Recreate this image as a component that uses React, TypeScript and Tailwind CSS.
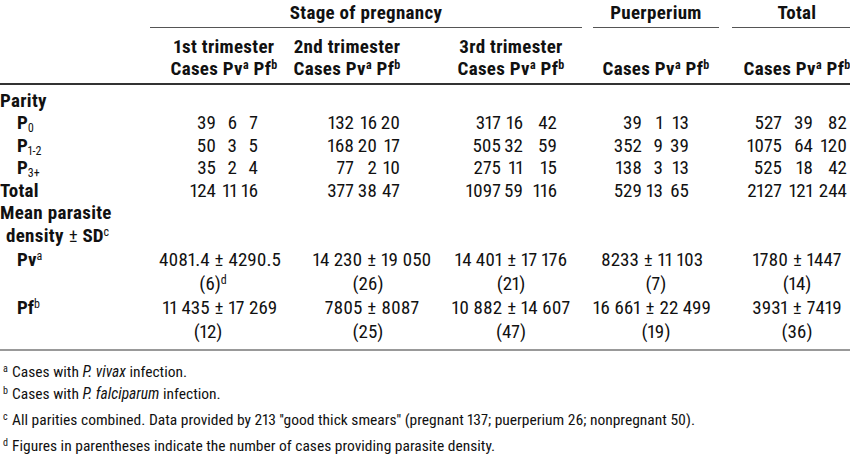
import React from 'react'

type Group = {
  cell: string
  head: string
  sub: [string, string, string]
  dens: string
  paren: string
}

// column groups: 1st, 2nd, 3rd trimester, puerperium, total
const groups: Group[] = [
  { cell: 'w-[140px]', head: 'pl-[8px]', sub: ['w-[66px]', 'w-[21px]', 'w-[21px]'], dens: '', paren: 'pr-[24px]' },
  { cell: 'w-[150px]', head: 'pr-[36px]', sub: ['w-[64px]', 'w-[23px]', 'w-[23px]'], dens: 'pl-[14px]', paren: 'pl-[6px]' },
  { cell: 'w-[142px]', head: '', sub: ['w-[61px]', 'w-[22px]', 'w-[34px]'], dens: '', paren: '' },
  { cell: 'ml-[11px] w-[126px]', head: '', sub: ['w-[49px]', 'w-[21px]', 'w-[26px]'], dens: 'pr-[8px]', paren: '' },
  { cell: 'ml-[13px] w-[130px]', head: '', sub: ['w-[50px]', 'w-[31px]', 'w-[34px]'], dens: '', paren: '' },
]

const parity = [
  { label: '0', h: 'h-[23px]', data: [[39, 6, 7], [132, 16, 20], [317, 16, 42], [39, 1, 13], [527, 39, 82]] },
  { label: '1-2', h: 'h-[22px]', data: [[50, 3, 5], [168, 20, 17], [505, 32, 59], [352, 9, 39], [1075, 64, 120]] },
  { label: '3+', h: 'h-[23px]', data: [[35, 2, 4], [77, 2, 10], [275, 11, 15], [138, 3, 13], [525, 18, 42]] },
]
const totals = [[124, 11, 16], [377, 38, 47], [1097, 59, 116], [529, 13, 65], [2127, 121, 244]]

const pv = ['4081.4', '14 230', '14 401', '8233', '1780']
const pvSd = ['4290.5', '19 050', '17 176', '11 103', '1447']
const pvN = ['6', '26', '21', '7', '14']
const pf = ['11 435', '7805', '10 882', '16 661', '3931']
const pfSd = ['17 269', '8087', '14 607', '22 499', '7419']
const pfN = ['12', '25', '47', '19', '36']

function Row({ h, label, children }: { h: string; label?: React.ReactNode; children?: React.ReactNode }) {
  return (
    <div className={`flex items-center whitespace-nowrap ${h}`}>
      <div className="w-[150px] shrink-0">{label}</div>
      {children}
    </div>
  )
}

function Sup({ children, bold }: { children: React.ReactNode; bold?: boolean }) {
  return <sup className={`text-[12px] ${bold ? 'font-bold' : 'font-normal'}`}>{children}</sup>
}

function PlusMinus() {
  return <span className="px-[5px]">±</span>
}

function CasesHead() {
  return (
    <>
      Cases Pv<Sup bold>a</Sup> Pf<Sup bold>b</Sup>
    </>
  )
}

function Foot({ mark, className = '', children }: { mark: string; className?: string; children: React.ReactNode }) {
  return (
    <div className={`flex h-[22px] items-center whitespace-nowrap ${className}`}>
      <span className="w-[12px] self-start pt-[2px] pl-[3px] text-[10px]">{mark}</span>
      <span>{children}</span>
    </div>
  )
}

export default function App() {
  return (
    <div className="w-[850px] h-[458px] overflow-hidden bg-white text-[#111] font-['Roboto','Open_Sans',sans-serif] [font-stretch:87%] proportional-nums text-[19px] leading-none">
      <div className="w-[862px]">
        {/* header */}
        <div className="pt-px font-bold tracking-[0.3px]">
          <Row h="h-[22px]">
            <div className="w-[432px] text-center">Stage of pregnancy</div>
            <div className="ml-[11px] w-[126px] text-center">Puerperium</div>
            <div className="ml-[13px] w-[130px] text-center">Total</div>
          </Row>
          <div className="mt-[4px] flex">
            <div className="w-[150px]" />
            <div className="h-px w-[432px] bg-[#555]" />
            <div className="ml-[11px] h-px w-[126px] bg-[#555]" />
            <div className="ml-[13px] h-px w-[130px] bg-[#555]" />
          </div>
          <div className="mt-[7px]">
            <Row h="h-[22px]">
              {['1st trimester', '2nd trimester', '3rd trimester'].map((t, i) => (
                <div key={t} className={`${groups[i].cell} ${groups[i].head} text-center`}>
                  {t}
                </div>
              ))}
            </Row>
            <Row h="h-[22px]">
              {groups.map((g, i) => (
                <div key={i} className={`${g.cell} ${g.head} text-center`}>
                  <CasesHead />
                </div>
              ))}
            </Row>
          </div>
          <div className="mt-[4px] h-[2px] bg-[#333]" />
        </div>

        {/* body */}
        <div className="pt-[4px]">
          <Row h="h-[22px]" label={<span className="font-bold tracking-[0.3px]">Parity</span>} />
          {parity.map((p) => (
            <Row
              key={p.label}
              h={p.h}
              label={
                <span className="pl-[17px] font-bold">
                  P<sub className="text-[12px] font-normal">{p.label}</sub>
                </span>
              }
            >
              {groups.map((g, i) => (
                <div key={i} className={`${g.cell} flex`}>
                  {p.data[i].map((n, j) => (
                    <span key={j} className={`${g.sub[j]} text-right`}>
                      {n}
                    </span>
                  ))}
                </div>
              ))}
            </Row>
          ))}
          <Row h="h-[22px]" label={<span className="font-bold tracking-[0.3px]">Total</span>}>
            {groups.map((g, i) => (
              <div key={i} className={`${g.cell} flex`}>
                {totals[i].map((n, j) => (
                  <span key={j} className={`${g.sub[j]} text-right`}>
                    {n}
                  </span>
                ))}
              </div>
            ))}
          </Row>
          <Row h="h-[23px]" label={<span className="font-bold tracking-[0.3px]">Mean parasite</span>} />
          <Row
            h="h-[23px]"
            label={
              <span className="pl-[6px]">
                <span className="font-bold tracking-[0.3px]">density</span>
                <PlusMinus />
                <span className="font-bold">SD</span>
                <Sup>c</Sup>
              </span>
            }
          />
          <Row
            h="h-[24px]"
            label={
              <span className="pl-[17px] font-bold">
                Pv<Sup>a</Sup>
              </span>
            }
          >
            {groups.map((g, i) => (
              <div key={i} className={`${g.cell} ${g.dens} text-center`}>
                {pv[i]}
                <PlusMinus />
                {pvSd[i]}
              </div>
            ))}
          </Row>
          <Row h="h-[24px]">
            {groups.map((g, i) => (
              <div key={i} className={`${g.cell} ${i === 0 ? 'pr-[14px]' : g.paren} text-center`}>
                ({pvN[i]}){i === 0 && <Sup>d</Sup>}
              </div>
            ))}
          </Row>
          <Row
            h="h-[24px]"
            label={
              <span className="pl-[17px] font-bold">
                Pf<Sup>b</Sup>
              </span>
            }
          >
            {groups.map((g, i) => (
              <div key={i} className={`${g.cell} ${g.dens} text-center`}>
                {pf[i]}
                <PlusMinus />
                {pfSd[i]}
              </div>
            ))}
          </Row>
          <Row h="h-[24px]">
            {groups.map((g, i) => (
              <div key={i} className={`${g.cell} ${g.paren} text-center`}>
                ({pfN[i]})
              </div>
            ))}
          </Row>
        </div>
        <div className="mt-[6px] h-[2px] bg-[#999]" />

        {/* footnotes */}
        <div className="pt-[11px] text-[15.5px]">
          <Foot mark="a">
            Cases with <i>P. vivax</i> infection.
          </Foot>
          <Foot mark="b">
            Cases with <i>P. falciparum</i> infection.
          </Foot>
          <Foot mark="c" className="mt-[4px]">
            All parities combined. Data provided by 213 ''good thick smears'' (pregnant 137; puerperium 26; nonpregnant 50).
          </Foot>
          <Foot mark="d" className="mt-[4px]">
            Figures in parentheses indicate the number of cases providing parasite density.
          </Foot>
        </div>
      </div>
    </div>
  )
}
